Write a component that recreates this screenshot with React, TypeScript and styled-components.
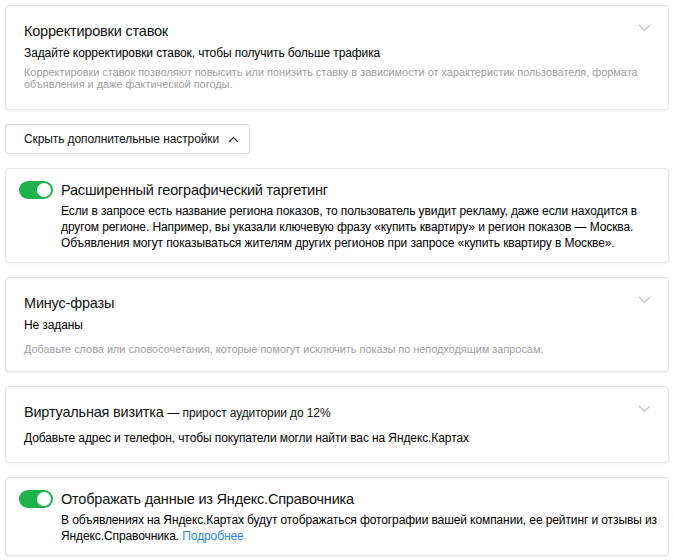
import React from "react";
import styled, { createGlobalStyle } from "styled-components";

const GlobalStyle = createGlobalStyle`
  body {
    margin: 0;
    background: #fff;
    font-family: "Liberation Sans", Arial, sans-serif;
    color: #000;
  }
`;

const Page = styled.div`
  display: flex;
  flex-direction: column;
  align-items: flex-start;
  gap: 14px;
  padding: 5px 4px 5px 5px;
`;

const Card = styled.div<{ $toggle?: boolean }>`
  position: relative;
  align-self: stretch;
  box-sizing: border-box;
  border: 1px solid #e6e6e6;
  border-radius: 4px;
  box-shadow: 0 1px 2px rgba(0, 0, 0, 0.06);
  background: #fff;
  padding: ${(p) => (p.$toggle ? "11px 4px 11px 13px" : "15px 24px 16px 18px")};
  display: ${(p) => (p.$toggle ? "flex" : "block")};
  gap: 8px;
`;

const Title = styled.div<{ $gap?: number }>`
  font-size: 14.5px;
  letter-spacing: -0.2px;
  line-height: 20px;
  color: #111;
  margin-bottom: ${(p) => p.$gap ?? 4}px;
`;

const Note = styled.span`
  font-size: 12px;
  letter-spacing: -0.1px;
`;

const Text = styled.div<{ $gap?: number }>`
  font-size: 12px;
  letter-spacing: -0.1px;
  line-height: 16px;
  margin-bottom: ${(p) => p.$gap ?? 0}px;
`;

const Hint = styled.div<{ $gap?: number }>`
  font-size: 10.9px;
  line-height: 12px;
  margin-bottom: ${(p) => p.$gap ?? 0}px;
  color: #a0a0a0;
`;

const Chevron = styled.svg`
  position: absolute;
  right: 17px;
  top: 18px;
  width: 13px;
  height: 8px;
`;

const Button = styled.button`
  display: flex;
  align-items: center;
  gap: 9px;
  height: 30px;
  padding: 0 10px 0 18px;
  border: 1px solid #d9d9d9;
  border-radius: 3px;
  background: #fff;
  font-family: inherit;
  font-size: 12px;
  letter-spacing: -0.1px;
  color: #111;
`;

const Switch = styled.div`
  flex: none;
  width: 34px;
  height: 18px;
  margin-top: 1px;
  border-radius: 9px;
  background: #1fb14b;
  position: relative;
  &::after {
    content: "";
    position: absolute;
    right: 2px;
    top: 2px;
    width: 14px;
    height: 14px;
    border-radius: 50%;
    background: #fff;
  }
`;

const Body = styled.div`
  flex: 1;
`;

const Link = styled.a`
  color: #2a86e4;
  text-decoration: none;
`;

const Down = () => (
  <Chevron viewBox="0 0 13 8">
    <path d="M1 1l5.5 5.5L12 1" fill="none" stroke="#c4c4c4" strokeWidth="1.2" />
  </Chevron>
);

export default function App() {
  return (
    <>
      <GlobalStyle />
      <Page>
        <Card>
          <Down />
          <Title>Корректировки ставок</Title>
          <Text $gap={5}>Задайте корректировки ставок, чтобы получить больше трафика</Text>
          <Hint $gap={3}>
            Корректировки ставок позволяют повысить или понизить ставку в зависимости от характеристик пользователя, формата
            объявления и даже фактической погоды.
          </Hint>
        </Card>

        <Button>
          Скрыть дополнительные настройки
          <svg width="11" height="7" viewBox="0 0 11 7">
            <path d="M1 6l4.5-4.5L10 6" fill="none" stroke="#333" strokeWidth="1.2" />
          </svg>
        </Button>

        <Card $toggle>
          <Switch />
          <Body>
            <Title $gap={3}>Расширенный географический таргетинг</Title>
            <Text>
              Если в запросе есть название региона показов, то пользователь увидит рекламу, даже если находится в
              другом регионе. Например, вы указали ключевую фразу «купить квартиру» и регион показов — Москва.
              Объявления могут показываться жителям других регионов при запросе «купить квартиру в Москве».
            </Text>
          </Body>
        </Card>

        <Card>
          <Down />
          <Title>Минус-фразы</Title>
          <Text $gap={10}>Не заданы</Text>
          <Hint>Добавьте слова или словосочетания, которые помогут исключить показы по неподходящим запросам.</Hint>
        </Card>

        <Card>
          <Down />
          <Title $gap={7}>
            Виртуальная визитка <Note>— прирост аудитории до 12%</Note>
          </Title>
          <Text>Добавьте адрес и телефон, чтобы покупатели могли найти вас на Яндекс.Картах</Text>
        </Card>

        <Card $toggle>
          <Switch />
          <Body>
            <Title $gap={3}>Отображать данные из Яндекс.Справочника</Title>
            <Text>
              В объявлениях на Яндекс.Картах будут отображаться фотографии вашей компании, ее рейтинг и отзывы из
              Яндекс.Справочника. <Link href="#">Подробнее</Link>
            </Text>
          </Body>
        </Card>
      </Page>
    </>
  );
}
